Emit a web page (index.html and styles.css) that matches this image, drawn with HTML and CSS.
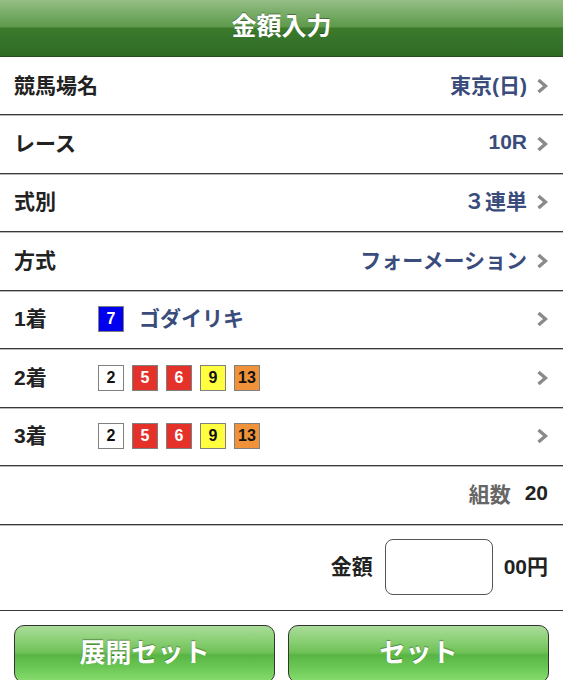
FILE: index.html
```html
<!DOCTYPE html>
<html lang="ja">
<head>
<meta charset="utf-8">
<title>金額入力</title>
<link rel="stylesheet" href="styles.css">
</head>
<body>
<header class="topbar"><h1 class="title">金額入力</h1></header>
<ul class="list">
  <li class="row">
    <span class="label">競馬場名</span>
    <span class="value">東京(日)</span>
    <svg class="chev" viewBox="0 0 12 16" width="12" height="16"><polyline points="2.5,2 9.5,8 2.5,14" fill="none" stroke="#8a8a8a" stroke-width="3.4"/></svg>
  </li>
  <li class="row">
    <span class="label">レース</span>
    <span class="value">10R</span>
    <svg class="chev" viewBox="0 0 12 16" width="12" height="16"><polyline points="2.5,2 9.5,8 2.5,14" fill="none" stroke="#8a8a8a" stroke-width="3.4"/></svg>
  </li>
  <li class="row">
    <span class="label">式別</span>
    <span class="value">３連単</span>
    <svg class="chev" viewBox="0 0 12 16" width="12" height="16"><polyline points="2.5,2 9.5,8 2.5,14" fill="none" stroke="#8a8a8a" stroke-width="3.4"/></svg>
  </li>
  <li class="row">
    <span class="label">方式</span>
    <span class="value">フォーメーション</span>
    <svg class="chev" viewBox="0 0 12 16" width="12" height="16"><polyline points="2.5,2 9.5,8 2.5,14" fill="none" stroke="#8a8a8a" stroke-width="3.4"/></svg>
  </li>
  <li class="row">
    <span class="label pos">1着</span>
    <span class="horses">
      <span class="num c-blue">7</span>
      <span class="horse-name">ゴダイリキ</span>
    </span>
    <svg class="chev" viewBox="0 0 12 16" width="12" height="16"><polyline points="2.5,2 9.5,8 2.5,14" fill="none" stroke="#8a8a8a" stroke-width="3.4"/></svg>
  </li>
  <li class="row">
    <span class="label pos">2着</span>
    <span class="horses">
      <span class="num c-white">2</span>
      <span class="num c-red">5</span>
      <span class="num c-red">6</span>
      <span class="num c-yellow">9</span>
      <span class="num c-orange">13</span>
    </span>
    <svg class="chev" viewBox="0 0 12 16" width="12" height="16"><polyline points="2.5,2 9.5,8 2.5,14" fill="none" stroke="#8a8a8a" stroke-width="3.4"/></svg>
  </li>
  <li class="row">
    <span class="label pos">3着</span>
    <span class="horses">
      <span class="num c-white">2</span>
      <span class="num c-red">5</span>
      <span class="num c-red">6</span>
      <span class="num c-yellow">9</span>
      <span class="num c-orange">13</span>
    </span>
    <svg class="chev" viewBox="0 0 12 16" width="12" height="16"><polyline points="2.5,2 9.5,8 2.5,14" fill="none" stroke="#8a8a8a" stroke-width="3.4"/></svg>
  </li>
  <li class="row row-count">
    <span class="count-label">組数</span>
    <span class="count-value">20</span>
  </li>
  <li class="row row-amount">
    <span class="amount-label">金額</span>
    <input class="amount-input" type="text" aria-label="金額">
    <span class="amount-unit">00円</span>
  </li>
</ul>
<div class="actions">
  <button class="btn" type="button">展開セット</button>
  <button class="btn" type="button">セット</button>
</div>
</body>
</html>
```
FILE: styles.css
```css
* { box-sizing: border-box; }
html, body { margin: 0; padding: 0; background: #fff; }
body {
  font-family: "Liberation Sans", "Noto Sans CJK JP", sans-serif;
  font-weight: 700;
  color: #222;
  overflow: hidden;
}
.topbar {
  height: 57px;
  border-bottom: 1px solid #2a4a22;
  background: linear-gradient(to bottom, #95be86 0%, #7aad69 22%, #5d994b 48%, #3c7a2b 50%, #35722a 75%, #306a22 100%);
  display: flex;
  align-items: center;
  justify-content: center;
}
.title {
  margin: 0 0 3px 0;
  font-size: 25px;
  font-weight: 700;
  color: #fff;
  text-shadow: 0 -1px 0 rgba(0,0,0,0.35);
  line-height: 1;
}
.list {
  list-style: none;
  margin: 0;
  padding: 0;
}
.row {
  height: 58.5px;
  border-bottom: 1px solid #3a3a3a;
  box-shadow: inset 0 1px 0 #b8b8b8;
  display: flex;
  align-items: center;
  padding: 0 15px 0 14px;
  font-size: 21px;
}
.row:first-child { box-shadow: none; height: 58px; }
.label, .value, .horse-name, .count-label, .count-value, .amount-label, .amount-unit {
  margin-bottom: 4px;
}
.label { color: #222; }
.label.pos { width: 84px; }
.value {
  margin-left: auto;
  color: #3a4c7b;
}
.chev { margin-left: 9px; flex: none; }
.horses {
  display: flex;
  align-items: center;
  gap: 8px;
  flex: 1;
}
.num {
  width: 26px;
  height: 26px;
  border: 1px solid #808080;
  display: flex;
  align-items: center;
  justify-content: center;
  font-size: 16px;
  font-weight: 700;
  line-height: 1;
}
.c-blue { background: #0000ee; color: #fff; }
.c-white { background: #fff; color: #111; }
.c-red { background: #e4322a; color: #fff; }
.c-yellow { background: #ffff40; color: #111; }
.c-orange { background: #f0923a; color: #111; }
.horse-name { color: #3a4c7b; margin-left: 7px; font-size: 21px; }
.row-count { justify-content: flex-end; }
.count-label { color: #666; }
.count-value { margin-left: 14px; color: #222; }
.row-amount {
  height: 86px;
  justify-content: flex-end;
}
.amount-label { color: #222; }
.amount-input {
  width: 108px;
  height: 56px;
  margin: 0 11px 0 12px;
  border: 1px solid #555;
  border-radius: 8px;
  background: #fff;
  font: inherit;
  outline: none;
}
.amount-unit { color: #222; }
.actions {
  display: flex;
  gap: 13px;
  padding: 14px 14px 0 14px;
}
.btn {
  flex: 1;
  height: 58px;
  border: 1px solid #333;
  border-radius: 10px;
  background: linear-gradient(to bottom, #aadc9a 0%, #8cd076 25%, #6fc157 47%, #58b544 52%, #6cc856 75%, #88de6e 100%);
  color: #fff;
  font-family: "Liberation Sans", "Noto Sans CJK JP", sans-serif;
  font-weight: 700;
  font-size: 26px;
  text-shadow: 0 -1px 1px rgba(0,0,0,0.35);
  padding: 0 0 6px 0;
}
```
